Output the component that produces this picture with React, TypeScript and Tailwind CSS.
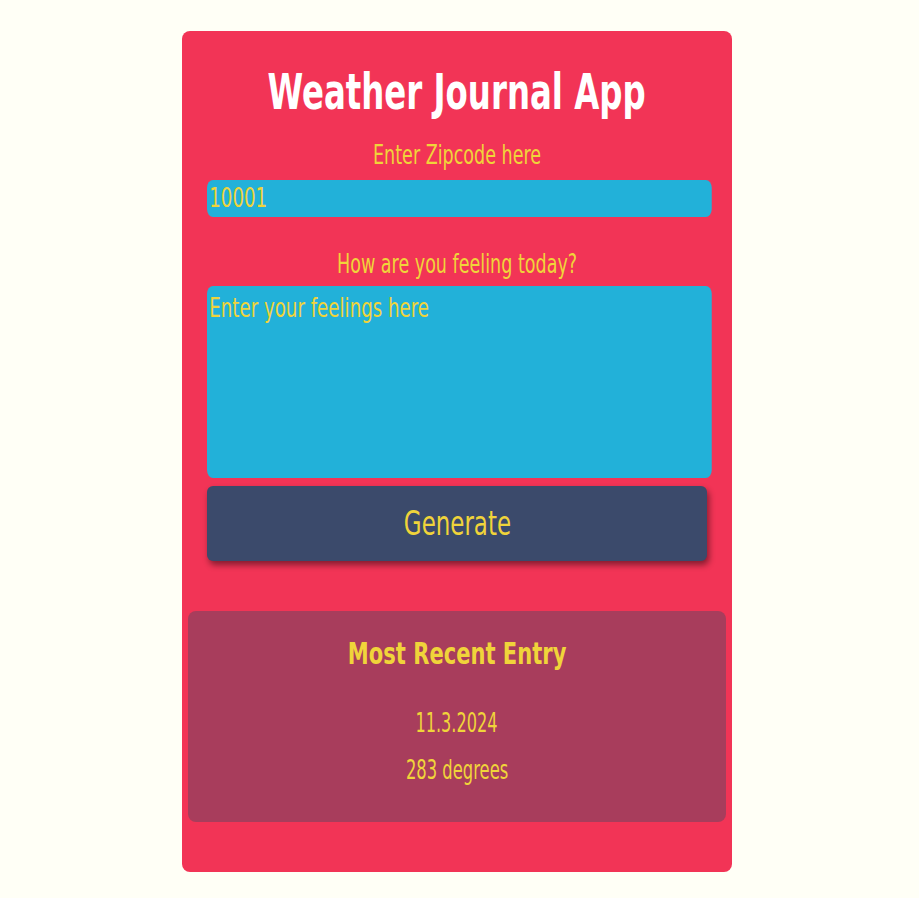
const font = "font-['DejaVu_Sans_Condensed','DejaVu_Sans','Liberation_Sans',sans-serif]";

function App() {
  return (
    <div className={`min-h-screen bg-[#fffff6] pt-[31px] ${font}`}>
      <main className="ml-[182px] flex h-[841px] w-[550px] flex-col items-center rounded-lg bg-[#f23456] px-[25px]">
        <h1 className="mt-[31px] w-max scale-x-[0.72] whitespace-nowrap text-[50px] font-bold leading-[60px] text-white">
          Weather Journal App
        </h1>

        <label htmlFor="zip" className="mt-[18px] block w-max scale-x-75 whitespace-nowrap text-[26px] leading-[30px] text-[#f0d43a]">
          Enter Zipcode here
        </label>
        <input
          id="zip"
          defaultValue="10001"
          className="mt-[10px] h-[37px] w-[673px] origin-left scale-x-75 self-start rounded-[8px] bg-[#22b1d9] px-[3px] text-[27px] text-[#f0d43a] outline-none"
        />

        <label htmlFor="feelings" className="mt-[32px] block w-max scale-x-75 whitespace-nowrap text-[26px] leading-[30px] text-[#f0d43a]">
          How are you feeling today?
        </label>
        <textarea
          id="feelings"
          placeholder="Enter your feelings here"
          className="mt-[7px] h-[192px] w-[673px] origin-left scale-x-75 self-start resize-none rounded-[8px] bg-[#22b1d9] px-[3px] pt-[6px] text-[27px] leading-[32px] text-[#f0d43a] outline-none placeholder:text-[#f0d43a]"
        />

        <button className="mt-[8px] h-[75px] w-[500px] self-start rounded-md bg-[#3b4a6b] text-[#f0d43a] shadow-[2px_4px_6px_rgba(0,0,0,0.45)]">
          <span className="inline-block scale-x-75 text-[34px]">Generate</span>
        </button>

        <section className="mt-[50px] flex h-[211px] w-[538px] shrink-0 flex-col items-center rounded-lg bg-[#a83d5c] text-[#f0d43a]">
          <h2 className="mt-[25px] w-max scale-x-[0.78] whitespace-nowrap text-[30px] font-bold leading-[36px]">
            Most Recent Entry
          </h2>
          <div className="mt-[36px] w-max scale-x-[0.69] text-[26px] leading-[30px]">11.3.2024</div>
          <div className="mt-[17px] w-max scale-x-[0.7] whitespace-nowrap text-[26px] leading-[30px]">283 degrees</div>
        </section>
      </main>
    </div>
  );
}

export default App;
